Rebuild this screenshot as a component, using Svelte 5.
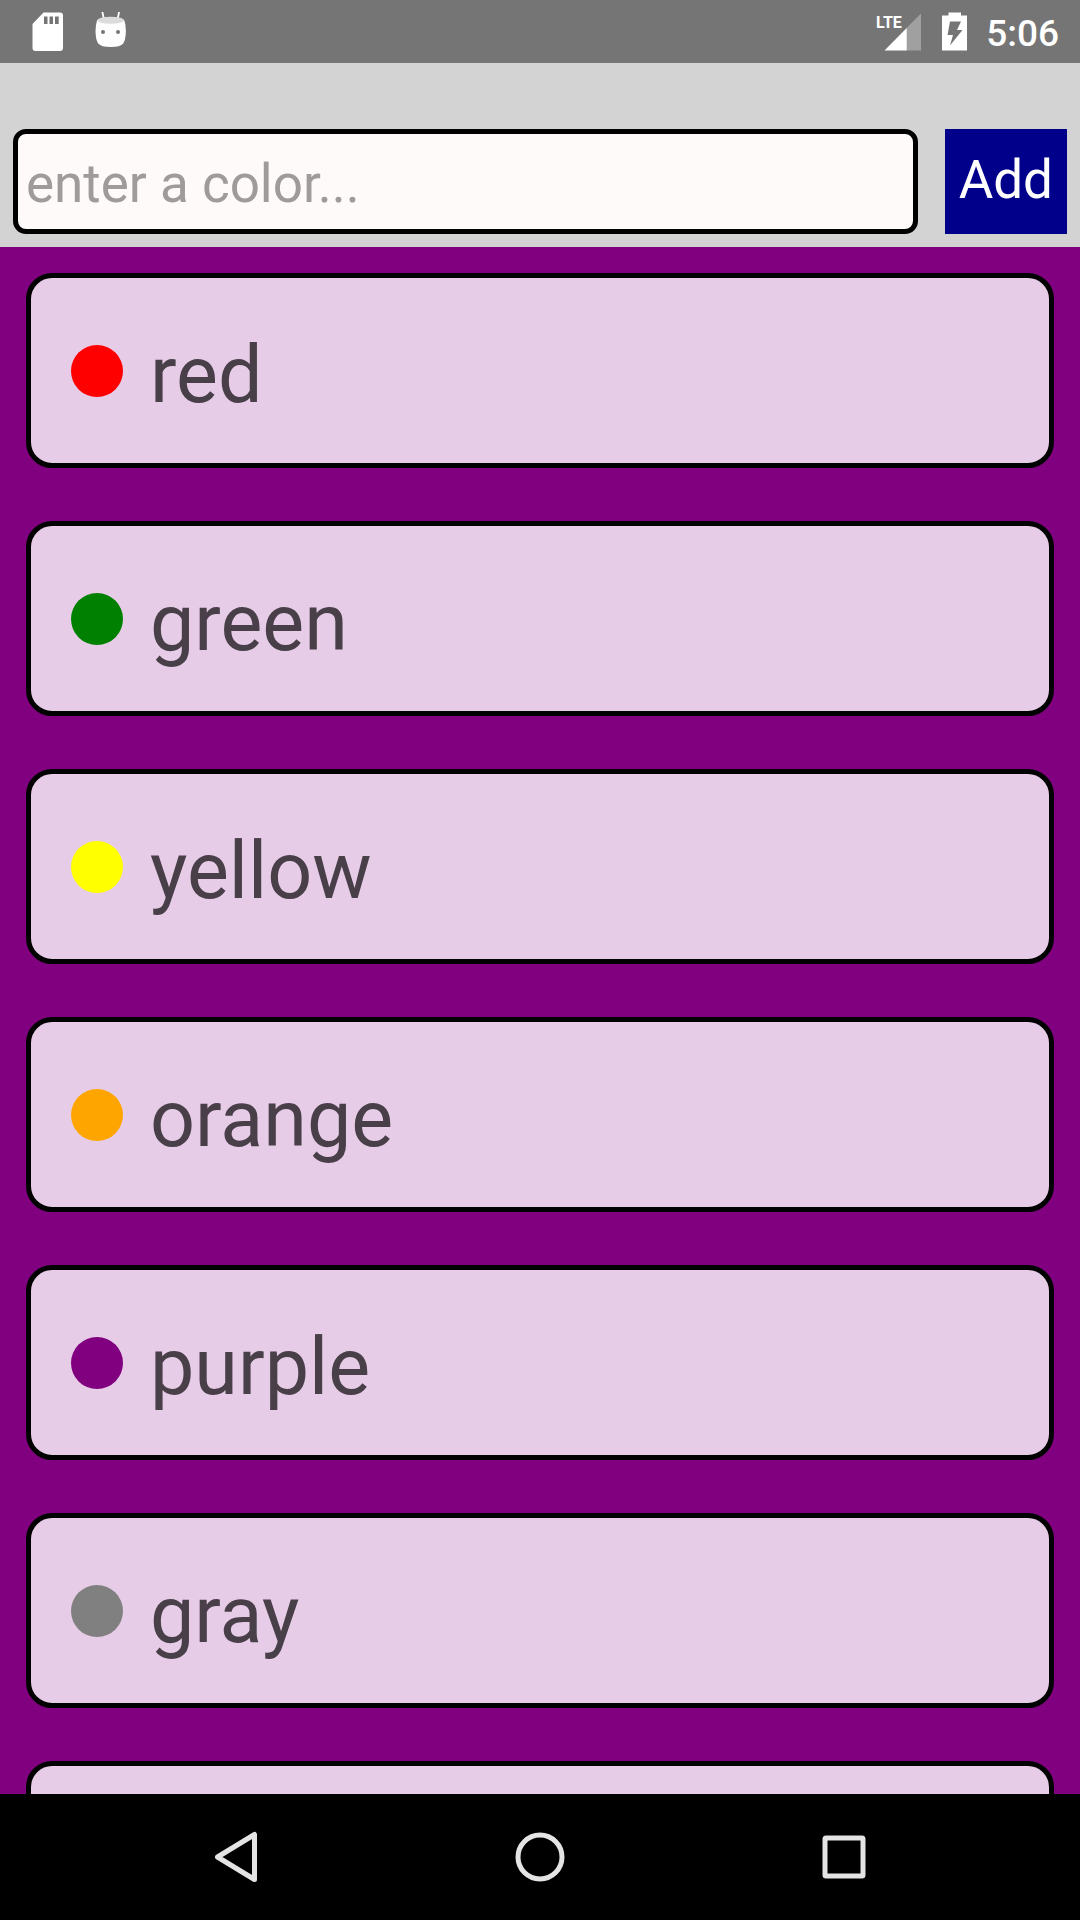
<script>
  let draft = $state('');
  let colors = $state(['red', 'green', 'yellow', 'orange', 'purple', 'gray', '']);

  function add(event) {
    event.preventDefault();
    const name = draft.trim();
    if (name) colors = [...colors.filter(Boolean), name];
    draft = '';
  }
</script>

<div class="screen">
  <div class="status">
    <div class="group left">
      <svg width="32" height="40" viewBox="0 0 32 40" aria-hidden="true">
        <path fill="#fff" fill-rule="evenodd" d="M11.500 0.500H28q3 0 3 3V36q0 3-3 3H3.500q-3 0-3-3V12zM12 4.500v7.500h3.500V4.500zm5.500 0v7.500H21V4.500zm5.500 0v7.500h3.700V4.500z" />
      </svg>
      <svg width="32" height="40" viewBox="0 0 32 40" aria-hidden="true">
        <path d="M7.500 0.500l1.500 7M24 0.500l-1.500 7" stroke="#fff" stroke-width="1.800" stroke-linecap="round" />
        <path fill="#fff" d="M2.200 8Q.5 13 .5 19q.2 9 2.700 12.500 3 3.500 12.500 3.500t12.500-3.500q2.500-3.500 2.700-12.500 0-6-1.700-11z" />
        <ellipse cx="15.700" cy="8.300" rx="13.300" ry="3.500" fill="#dcdcdc" />
        <circle cx="8" cy="20" r="2" fill="#757575" />
        <circle cx="23" cy="20" r="2" fill="#757575" />
      </svg>
    </div>
    <div class="group right">
      <svg width="46" height="40" viewBox="0 0 46 40" role="img" aria-label="LTE signal">
        <path fill="#a0a0a0" d="M45 1.500V38.500H30V16.500z" />
        <path fill="#fff" d="M30.700 16V38.500H8.500z" />
        <text class="lte" x="0" y="16">LTE</text>
      </svg>
      <svg width="26" height="40" viewBox="0 0 26 40" role="img" aria-label="Charging">
        <path fill="#fff" d="M6.500 0.500h12.500v3H25v35H0V3.500h6.500z" />
        <path fill="#757575" d="M8 9.500h11l-4 8.500h5.500L8 33.500l3-10.500H5.500z" />
      </svg>
      <time>5:06</time>
    </div>
  </div>

  <form onsubmit={add}>
    <input type="text" bind:value={draft} placeholder="enter a color..." aria-label="Color name" />
    <button class="add" type="submit">Add</button>
  </form>

  <ul>
    {#each colors as color}
      <li>
        <span class="dot" style:background-color={color}></span>
        <span class="name">{color}</span>
      </li>
    {/each}
  </ul>

  <nav>
    <button type="button" aria-label="Back">
      <svg width="64" height="64" viewBox="0 0 64 64"><path d="M50.500 9.500v45L13.500 32z" class="line" /></svg>
    </button>
    <button type="button" aria-label="Home">
      <svg width="64" height="64" viewBox="0 0 64 64"><circle cx="32" cy="32" r="22" class="line" /></svg>
    </button>
    <button type="button" aria-label="Recent apps">
      <svg width="64" height="64" viewBox="0 0 64 64"><rect x="13" y="13" width="38" height="38" rx="1" class="line" /></svg>
    </button>
  </nav>
</div>

<style>
  :global(body) {
    margin: 0;
  }

  .screen {
    display: flex;
    flex-direction: column;
    height: 100vh;
    overflow: hidden;
    background: #800080;
    font-family: Roboto, 'Liberation Sans', sans-serif;
  }

  .status {
    display: flex;
    flex: none;
    justify-content: space-between;
    align-items: center;
    height: 63px;
    padding: 0 21px 0 32px;
    box-sizing: border-box;
    background: #757575;
    color: #fff;
  }

  .group {
    display: flex;
    align-items: center;
  }

  .left {
    gap: 31px;
  }

  .right {
    gap: 20px;
  }

  .right svg + time {
    margin-left: -2px;
  }

  .lte {
    fill: #fff;
    font-family: Roboto, sans-serif;
    font-size: 16px;
    font-weight: 700;
  }

  time {
    padding-top: 4px;
    font-size: 37px;
    font-weight: 500;
    line-height: 44px;
  }

  form {
    display: flex;
    flex: none;
    gap: 27px;
    padding: 66px 13px 13px;
    background: #d3d3d3;
  }

  input {
    flex: 1;
    min-width: 0;
    height: 105px;
    box-sizing: border-box;
    padding: 4px 8px 0;
    border: 5px solid #000;
    border-radius: 13px;
    background: #fffafa;
    color: #222;
    font: inherit;
    font-size: 53px;
  }

  input::placeholder {
    color: #9e9b9a;
    opacity: 1;
  }

  .add {
    padding: 0 14px 4px;
    border: 0;
    background: #00008b;
    color: #fff;
    font: inherit;
    font-size: 53px;
  }

  ul {
    display: flex;
    flex: 1;
    flex-direction: column;
    gap: 53px;
    min-height: 0;
    margin: 0;
    padding: 26px 26px 0;
    overflow: hidden;
    list-style: none;
  }

  li {
    display: flex;
    flex: none;
    align-items: center;
    gap: 27px;
    padding: 46px 40px;
    border: 5px solid #000;
    border-radius: 26px;
    background: #e6cce6;
  }

  .dot {
    width: 52px;
    height: 52px;
    border-radius: 50%;
  }

  .name {
    padding-top: 9px;
    color: #483f48;
    font-size: 79px;
    line-height: 84px;
  }

  nav {
    display: flex;
    flex: none;
    justify-content: center;
    align-items: center;
    gap: 240px;
    height: 126px;
    background: #000;
  }

  nav button {
    display: flex;
    padding: 0;
    border: 0;
    background: none;
  }

  .line {
    fill: none;
    stroke: #e4e4e4;
    stroke-width: 5px;
    stroke-linejoin: round;
  }
</style>
